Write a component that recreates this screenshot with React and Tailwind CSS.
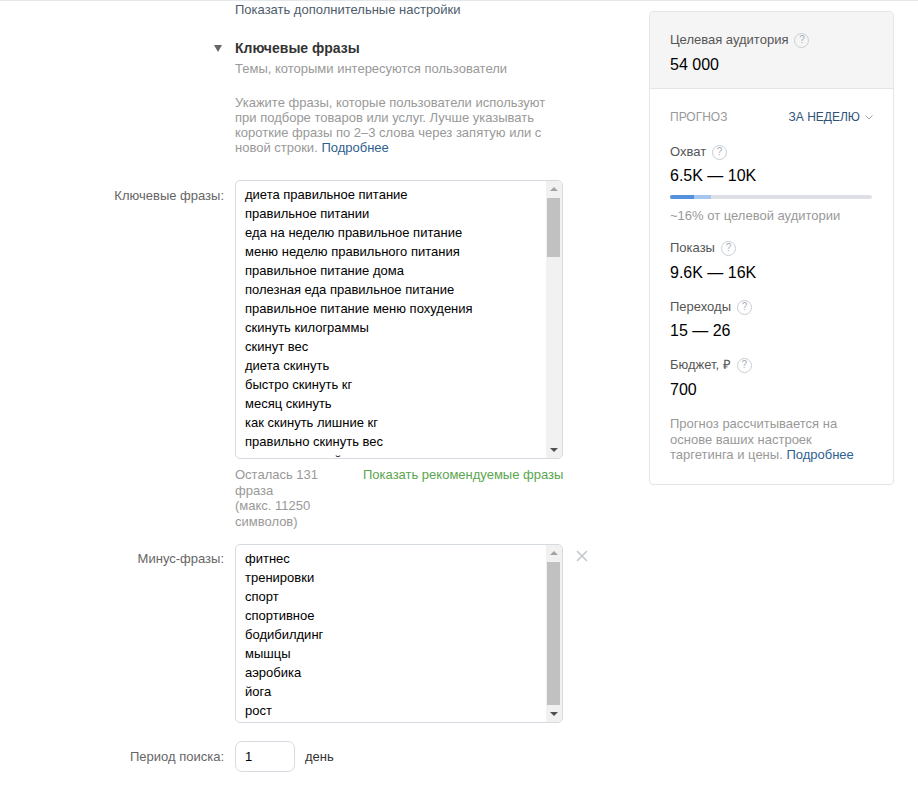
const font = { fontFamily: '"Liberation Sans", Arial, sans-serif' };

const keywords = [
  "диета правильное питание",
  "правильное питании",
  "еда на неделю правильное питание",
  "меню неделю правильного питания",
  "правильное питание дома",
  "полезная еда правильное питание",
  "правильное питание меню похудения",
  "скинуть килограммы",
  "скинут вес",
  "диета скинуть",
  "быстро скинуть кг",
  "месяц скинуть",
  "как скинуть лишние кг",
  "правильно скинуть вес",
  "скинуть лишний вес",
];

const minus = [
  "фитнес",
  "тренировки",
  "спорт",
  "спортивное",
  "бодибилдинг",
  "мышцы",
  "аэробика",
  "йога",
  "рост",
];

const Hint = () => (
  <span className="inline-flex items-center justify-center w-[15px] h-[15px] rounded-full border border-[#c9ced4] text-[10px] leading-none text-[#a9b0b8] ml-[6px]">
    ?
  </span>
);

const Scrollbar = ({ thumbTop, thumbHeight }) => (
  <div className="absolute top-0 right-0 bottom-0 w-[16px] bg-[#f1f1f1]">
    <div className="absolute top-[6px] left-[4px] w-0 h-0 border-l-[4px] border-r-[4px] border-b-[4px] border-l-transparent border-r-transparent border-b-[#a3a3a3]" />
    <div
      className="absolute left-[1px] w-[13px] bg-[#c1c1c1]"
      style={{ top: thumbTop, height: thumbHeight }}
    />
    <div className="absolute bottom-[6px] left-[4px] w-0 h-0 border-l-[4px] border-r-[4px] border-t-[4px] border-l-transparent border-r-transparent border-t-[#505050]" />
  </div>
);

const FakeTextarea = ({ lines, height, thumbTop, thumbHeight }) => (
  <div
    className="relative w-[328px] border border-[#d5dbe1] rounded-[5px] bg-white overflow-hidden"
    style={{ height }}
  >
    <div className="pl-[9px] pt-[4px] text-[13px] leading-[19px] text-black">
      {lines.map((l) => (
        <div key={l}>{l}</div>
      ))}
    </div>
    <Scrollbar thumbTop={thumbTop} thumbHeight={thumbHeight} />
  </div>
);

const Row = ({ label, labelTop, children, className = "" }) => (
  <div className={`flex ${className}`}>
    <div
      className="w-[224px] shrink-0 text-right text-[13px] leading-[16px] text-[#666]"
      style={{ paddingTop: labelTop }}
    >
      {label}
    </div>
    <div className="ml-[11px]">{children}</div>
  </div>
);

const Metric = ({ label, value, mt, vmt }) => (
  <div style={{ marginTop: mt }}>
    <div className="flex items-center text-[13px] leading-[18px] text-[#555]">
      {label}
      <Hint />
    </div>
    <div
      className="text-[16px] leading-[20px] text-black"
      style={{ marginTop: vmt }}
    >
      {value}
    </div>
  </div>
);

export default function App() {
  return (
    <div
      className="w-[918px] h-[789px] bg-white border-t border-[#e4e7ea] overflow-hidden flex"
      style={font}
    >
      <div className="w-[649px] shrink-0">
        <div className="pl-[235px] pt-[1px] text-[13px] leading-[16px] text-[#4e5c6c]">
          Показать дополнительные настройки
        </div>

        <div className="pl-[235px] mt-[21px] relative">
          <span className="absolute left-[214px] top-[6px] w-0 h-0 border-l-[4px] border-r-[4px] border-t-[7px] border-l-transparent border-r-transparent border-t-[#666]" />
          <div className="text-[14px] leading-[18px] font-bold text-[#333]">
            Ключевые фразы
          </div>
          <div className="mt-[4px] text-[13px] leading-[16px] text-[#999]">
            Темы, которыми интересуются пользователи
          </div>
          <div className="mt-[18px] text-[13px] leading-[15px] text-[#999]">
            Укажите фразы, которые пользователи используют
            <br />
            при подборе товаров или услуг. Лучше указывать
            <br />
            короткие фразы по 2–3 слова через запятую или с
            <br />
            новой строки. <span className="text-[#2f5f8f]">Подробнее</span>
          </div>
        </div>

        <Row label="Ключевые фразы:" labelTop={8} className="mt-[25px]">
          <FakeTextarea lines={keywords} height={279} thumbTop={17} thumbHeight={59} />
          <div className="flex mt-[8px] text-[13px] leading-[15.5px]">
            <div className="w-[128px] text-[#999]">
              Осталась 131
              <br />
              фраза
              <br />
              (макс. 11250
              <br />
              символов)
            </div>
            <div className="text-[#5aa64f]">Показать рекомендуемые фразы</div>
          </div>
        </Row>

        <Row label="Минус-фразы:" labelTop={7} className="mt-[15px]">
          <div className="flex items-start">
            <FakeTextarea lines={minus} height={179} thumbTop={17} thumbHeight={143} />
            <span className="ml-[13px] mt-[6px] text-[#c4c8cc]">
              <svg width="12" height="12" viewBox="0 0 12 12">
                <path d="M1 1 L11 11 M11 1 L1 11" stroke="currentColor" strokeWidth="1.6" />
              </svg>
            </span>
          </div>
        </Row>

        <Row label="Период поиска:" labelTop={8} className="mt-[18px]">
          <div className="flex items-center">
            <div className="w-[60px] h-[31px] border border-[#d5dbe1] rounded-[7px] pl-[9px] text-[13px] leading-[29px] text-black">
              1
            </div>
            <span className="ml-[10px] text-[13px] text-[#333]">день</span>
          </div>
        </Row>
      </div>

      <div className="w-[245px] shrink-0 mt-[10px] self-start border border-[#e3e6e9] rounded-[4px] overflow-hidden">
        <div className="bg-[#f5f5f5] border-b border-[#e3e6e9] px-[20px] pt-[19px] pb-[13px]">
          <div className="flex items-center text-[13px] leading-[18px] text-[#555]">
            Целевая аудитория
            <Hint />
          </div>
          <div className="mt-[6px] text-[16px] leading-[20px] text-black">54 000</div>
        </div>
        <div className="px-[20px] pt-[20px] pb-[21px]">
          <div className="flex items-center justify-between text-[12px] leading-[16px]">
            <span className="text-[#999]">ПРОГНОЗ</span>
            <span className="flex items-center text-[#2f5277]">
              ЗА НЕДЕЛЮ
              <svg className="ml-[5px]" width="8" height="5" viewBox="0 0 8 5">
                <path d="M0.5 0.5 L4 4 L7.5 0.5" stroke="#9aa3ad" fill="none" strokeWidth="1" />
              </svg>
            </span>
          </div>

          <Metric label="Охват" value="6.5K — 10K" mt={18} vmt={5} />
          <div className="mt-[9px] h-[4px] w-[202px] bg-[#dde1e6] rounded-[2px] flex overflow-hidden">
            <div className="w-[24px] bg-[#5590dc]" />
            <div className="w-[17px] bg-[#a6c6ef]" />
          </div>
          <div className="mt-[8px] text-[13px] leading-[18px] text-[#999]">
            ~16% от целевой аудитории
          </div>

          <Metric label="Показы" value="9.6K — 16K" mt={14} vmt={6} />
          <Metric label="Переходы" value="15 — 26" mt={15} vmt={5} />
          <Metric label="Бюджет, ₽" value="700" mt={15} vmt={6} />

          <div className="mt-[16px] text-[13px] leading-[15.5px] text-[#999]">
            Прогноз рассчитывается на
            <br />
            основе ваших настроек
            <br />
            таргетинга и цены. <span className="text-[#2f5f8f]">Подробнее</span>
          </div>
        </div>
      </div>
    </div>
  );
}
